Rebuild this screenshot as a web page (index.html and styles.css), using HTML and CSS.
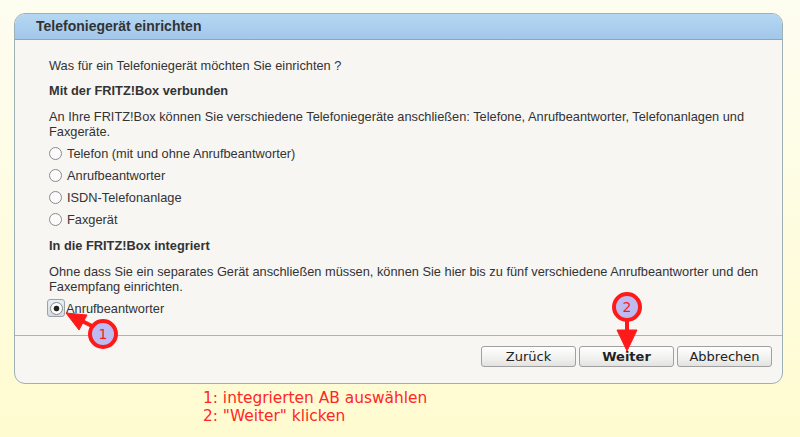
FILE: index.html
```html
<!DOCTYPE html>
<html lang="de">
<head>
<meta charset="UTF-8">
<meta name="viewport" content="width=device-width, initial-scale=1.0">
<title>Telefoniegerät einrichten</title>
<link rel="stylesheet" href="styles.css">
</head>
<body>

<div class="panel">
  <div class="panel-head">Telefoniegerät einrichten</div>

  <div class="panel-body">
    <p class="question">Was für ein Telefoniegerät möchten Sie einrichten ?</p>

    <h2>Mit der FRITZ!Box verbunden</h2>
    <p>An Ihre FRITZ!Box können Sie verschiedene Telefoniegeräte anschließen: Telefone, Anrufbeantworter, Telefonanlagen und Faxgeräte.</p>

    <div class="options">
      <label class="option"><span class="radio"></span>Telefon (mit und ohne Anrufbeantworter)</label>
      <label class="option"><span class="radio"></span>Anrufbeantworter</label>
      <label class="option"><span class="radio"></span>ISDN-Telefonanlage</label>
      <label class="option"><span class="radio"></span>Faxgerät</label>
    </div>

    <h2>In die FRITZ!Box integriert</h2>
    <p>Ohne dass Sie ein separates Gerät anschließen müssen, können Sie hier bis zu fünf verschiedene Anrufbeantworter und den Faxempfang einrichten.</p>

    <div class="options">
      <label class="option selected"><span class="focus"><span class="radio checked"></span></span>Anrufbeantworter</label>
    </div>
  </div>

  <div class="panel-foot">
    <button type="button">Zurück</button>
    <button type="button" class="primary">Weiter</button>
    <button type="button">Abbrechen</button>
  </div>
</div>

<div class="notes">
  1: integrierten AB auswählen<br>
  2: "Weiter" klicken
</div>

<!-- Markierungen über dem Dialog -->
<svg class="markers" width="800" height="437" viewBox="0 0 800 437">
  <g fill="#ff1a1a" stroke="#ff1a1a">
    <line x1="94" y1="327" x2="76" y2="318" stroke-width="4"/>
    <polygon points="66,313 87,315 79,330" stroke-width="1"/>
    <line x1="627" y1="320" x2="627" y2="334" stroke-width="4"/>
    <polygon points="627,351 617,330 637,330" stroke-width="1"/>
  </g>
  <circle cx="103" cy="334" r="13" fill="#bcbcf2" stroke="#ff1a1a" stroke-width="4"/>
  <circle cx="627" cy="307" r="13" fill="#bcbcf2" stroke="#ff1a1a" stroke-width="4"/>
  <text x="103" y="339" class="marker-num">1</text>
  <text x="627" y="312" class="marker-num">2</text>
</svg>

</body>
</html>
```

FILE: styles.css
```css
body {
  font-family: "Liberation Sans", Arial, sans-serif;
  font-size: 12.8px;
  color: #333;
  margin: 0;
  height: 437px;
  background: linear-gradient(to bottom, #fdfdf1 0%, #fffbd0 100%);
  position: relative;
  overflow: hidden;
}

.panel {
  margin: 13px 0 0 14px;
  width: 767px;
  border: 1px solid #9fb0b4;
  border-radius: 11px;
  background-color: #f7f6f3;
  overflow: hidden;
}

.panel-head {
  height: 25px;
  line-height: 25px;
  padding-left: 21px;
  font-size: 14px;
  font-weight: bold;
  color: #333;
  background: linear-gradient(to bottom, #b4d7f3 0%, #a3c7ea 100%);
  border-bottom: 1px solid #8fa6b5;
}

.panel-body {
  padding: 18px 12px 16px 34px;
  border-bottom: 1px solid #a9b4b6;
}

.panel-body p,
.panel-body h2 {
  margin: 0;
  line-height: 15px;
  font-size: 12.8px;
}

.panel-body h2 {
  font-weight: bold;
  margin-top: 10px;
}

.panel-body h2 + p {
  margin-top: 11px;
}

.options {
  margin-top: 3px;
}

.options + h2 {
  margin-top: 8px !important;
}

.option {
  display: flex;
  align-items: center;
  height: 22px;
}

.radio {
  box-sizing: border-box;
  width: 13px;
  height: 13px;
  border: 1px solid #8a8a8a;
  border-radius: 50%;
  background-color: #fbfbfb;
  margin-right: 5px;
  flex-shrink: 0;
}

.focus {
  box-sizing: border-box;
  display: flex;
  justify-content: center;
  align-items: center;
  width: 18px;
  height: 18px;
  margin-left: -2px;
  margin-right: 1px;
  border: 1px solid #9aa2a8;
  border-radius: 3px;
  background: linear-gradient(to bottom, #e9eef2 0%, #d3dbe2 100%);
}

.focus .radio {
  margin-right: 0;
}

.radio.checked {
  background: radial-gradient(circle, #222 0, #222 2.5px, #fbfbfb 3.2px);
}

.panel-foot {
  display: flex;
  justify-content: flex-end;
  gap: 3px;
  padding: 10px 10px 16px 0;
}

button {
  width: 95px;
  height: 21px;
  padding: 0;
  font-family: "DejaVu Sans", sans-serif;
  font-size: 13px;
  color: #222;
  border: 1px solid #a0a0a0;
  border-radius: 3px;
  background: linear-gradient(to bottom, #ffffff 0%, #f0f0ee 60%, #e2e2df 100%);
  cursor: pointer;
}

button.primary {
  font-weight: bold;
}

.notes {
  margin: 5px 0 0 203px;
  font-family: "DejaVu Sans", sans-serif;
  font-size: 15.4px;
  line-height: 18px;
  color: #ff2626;
}

.markers {
  position: absolute;
  top: 0;
  left: 0;
}

.marker-num {
  font-family: "DejaVu Sans", sans-serif;
  font-size: 14px;
  fill: #ff1a1a;
  text-anchor: middle;
}
```
